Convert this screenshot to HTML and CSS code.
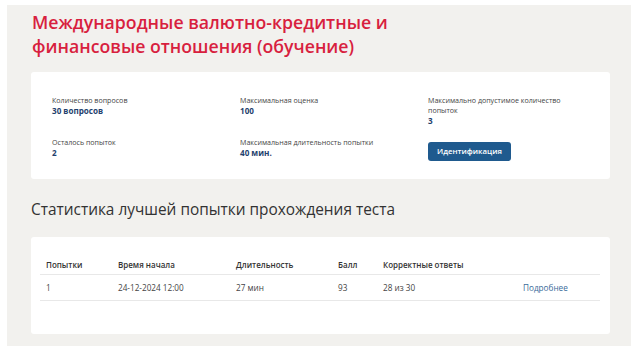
FILE: index.html
```html
<!DOCTYPE html>
<html lang="ru">
<head>
<meta charset="utf-8">
<link rel="stylesheet" href="styles.css">
</head>
<body>
<div class="page">
  <h1 class="title">Международные валютно-кредитные и<br>финансовые отношения (обучение)</h1>
  <section class="card info">
    <div class="item"><div class="label">Количество вопросов</div><div class="value">30 вопросов</div></div>
    <div class="item"><div class="label">Максимальная оценка</div><div class="value">100</div></div>
    <div class="item"><div class="label">Максимально допустимое количество<br>попыток</div><div class="value">3</div></div>
    <div class="item"><div class="label">Осталось попыток</div><div class="value">2</div></div>
    <div class="item"><div class="label">Максимальная длительность попытки</div><div class="value">40 мин.</div></div>
    <div class="item"><button class="btn">Идентификация</button></div>
  </section>
  <h2 class="subtitle">Статистика лучшей попытки прохождения теста</h2>
  <section class="card stats">
    <table class="tbl">
      <thead>
        <tr><th class="c1">Попытки</th><th class="c2">Время начала</th><th class="c3">Длительность</th><th class="c4">Балл</th><th class="c5">Корректные ответы</th><th></th></tr>
      </thead>
      <tbody>
        <tr><td>1</td><td>24-12-2024 12:00</td><td>27 мин</td><td>93</td><td>28 из 30</td><td><a class="link" href="#">Подробнее</a></td></tr>
      </tbody>
    </table>
  </section>
</div>
</body>
</html>
```
FILE: styles.css
```css
html, body { margin: 0; padding: 0; background: #fff; }
body { font-family: "Open Sans", "Noto Sans", sans-serif; color: #333; }
.page {
  margin: 5px 1px 0 7px;
  height: 341px;
  box-sizing: border-box;
  background: #f2f1ee;
  padding: 5px 21px 0 24px;
}
.title {
  margin: 0 0 0 1px;
  font-family: "Open Sans", sans-serif;
  font-weight: 600;
  font-size: 17.7px;
  line-height: 24px;
  color: #d81f3f;
}
.card {
  background: #fff;
  border-radius: 3px;
}
.info {
  margin-top: 14px;
  height: 107px;
  box-sizing: border-box;
  padding: 23px 0 0 21px;
  display: grid;
  grid-template-columns: 188px 188px 1fr;
  grid-template-rows: 42px auto;
}
.label { font-size: 7.1px; line-height: 10px; color: #444; }
.value { font-size: 8.1px; line-height: 11px; font-weight: 700; color: #1f426e; }
.btn {
  margin-top: 2px;
  background: #1f5a8e;
  color: #fff;
  border: none;
  border-radius: 3px;
  font-family: "Open Sans", sans-serif;
  font-size: 7.8px;
  font-weight: 600;
  width: 83px;
  height: 19px;
  padding: 0;
}
.subtitle {
  margin: 20px 0 0 0;
  font-weight: 400;
  font-size: 15.4px;
  line-height: 22px;
  color: #333;
}
.stats {
  margin-top: 16px;
  height: 97px;
  box-sizing: border-box;
  padding: 18px 10px 0 9px;
}
.tbl { width: 100%; border-collapse: collapse; font-size: 8.2px; }
.tbl th { text-align: left; font-weight: 600; color: #333; font-size: 8px; height: 19px; padding: 0 0 0 6px; border-bottom: 1px solid #e8e8e8; }
.tbl td { color: #444; height: 25px; padding: 0 0 0 6px; border-bottom: 1px solid #e8e8e8; }
.c1 { width: 66px; }
.c2 { width: 112px; }
.c3 { width: 96px; }
.c4 { width: 39px; }
.c5 { width: 134px; }
.link { color: #3a6a9a; text-decoration: none; }
```
